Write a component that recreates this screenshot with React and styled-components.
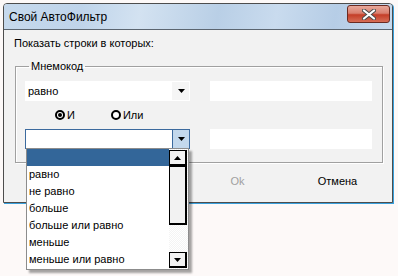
import styled, { createGlobalStyle } from "styled-components";

const GlobalStyle = createGlobalStyle`
  body {
    margin: 0;
    background: #fdf9f8;
    font-family: "Liberation Sans", Arial, sans-serif;
    font-size: 11px;
    color: #000;
  }
`;

const options = [
  "",
  "равно",
  "не равно",
  "больше",
  "больше или равно",
  "меньше",
  "меньше или равно",
];

const Page = styled.div`
  padding: 3px 0 0 3px;
  width: 398px;
  height: 276px;
  box-sizing: border-box;
`;

const Window = styled.div`
  position: relative;
  width: 390px;
  height: 200px;
  box-sizing: border-box;
  border: 1px solid #4d4d4d;
  border-radius: 4px 4px 0 0;
  box-shadow: 1px 1px 0 #3aa0dc;
  display: flex;
  flex-direction: column;
  background: #f2f2f2;
`;

const TitleBar = styled.div`
  height: 25px;
  display: flex;
  align-items: center;
  justify-content: space-between;
  padding: 0 2px 0 5px;
  border-bottom: 1px solid #5b6570;
  border-radius: 3px 3px 0 0;
  background: linear-gradient(
    100deg,
    #c6d9ed 0%,
    #bfd4ea 20%,
    #d3e2f1 35%,
    #b9cfe6 55%,
    #c9dbee 70%,
    #b6cde6 85%,
    #c8daee 100%
  );
`;

const Title = styled.span`
  font-size: 12px;
  margin-top: 1px;
`;

const CloseButton = styled.div`
  align-self: flex-start;
  width: 41px;
  height: 16px;
  margin-top: 1px;
  border: 1px solid #6b2b22;
  border-radius: 3px;
  background: linear-gradient(#e9a89b 0%, #d9806f 45%, #c43e28 55%, #d66d56 100%);
  display: flex;
  align-items: center;
  justify-content: center;
`;

const Body = styled.div`
  flex: 1;
  display: flex;
  flex-direction: column;
  padding: 5px 8px 0 10px;
`;

const Prompt = styled.div`
  height: 16px;
  line-height: 16px;
`;

const Group = styled.fieldset`
  margin: 9px 0 0 1px;
  padding: 9px 10px 13px 9px;
  border: 1px solid #a0a0a0;
  box-shadow: inset 1px 1px 0 #fff, 1px 1px 0 #fff;
  display: flex;
  flex-direction: column;
  min-width: 0;
  width: 368px;
  box-sizing: border-box;
`;

const Legend = styled.legend`
  padding: 0 2px;
  margin-left: 4px;
  line-height: 12px;
`;

const Row = styled.div`
  display: flex;
  gap: 20px;
  height: 20px;
`;

const Combo = styled.div`
  position: relative;
  width: 165px;
  box-sizing: border-box;
  background: #fff;
  display: flex;
  align-items: stretch;
  border: 1px solid ${(p) => (p.$focused ? "#3c6a9e" : "#fff")};
`;

const ComboText = styled.div`
  flex: 1;
  padding-left: 2px;
  line-height: 18px;
`;

const ComboArrow = styled.div`
  width: 16px;
  display: flex;
  align-items: center;
  justify-content: center;
  background: ${(p) => (p.$focused ? "#c3d8ec" : "#f5f5f5")};
  border-left: 1px solid ${(p) => (p.$focused ? "#3c6a9e" : "#f5f5f5")};
`;

const TextBox = styled.div`
  width: 162px;
  background: #fff;
`;

const RadioRow = styled.div`
  display: flex;
  gap: 36px;
  padding: 0 0 1px 30px;
  height: 28px;
  box-sizing: border-box;
  align-items: center;
`;

const Radio = styled.label`
  display: flex;
  align-items: center;
  gap: 2px;
`;

const RadioCircle = styled.span`
  width: 10px;
  height: 10px;
  box-sizing: border-box;
  border: 2px solid #000;
  border-radius: 50%;
  background: #fff;
  display: flex;
  align-items: center;
  justify-content: center;
  &::after {
    content: "";
    width: 4px;
    height: 4px;
    border-radius: 50%;
    background: ${(p) => (p.$checked ? "#000" : "transparent")};
  }
`;

const Buttons = styled.div`
  display: flex;
  justify-content: flex-end;
  gap: 25px;
  padding: 8px 9px 0 0;
`;

const Button = styled.div`
  width: 75px;
  text-align: center;
  line-height: 20px;
  color: ${(p) => (p.$disabled ? "#a0a0a0" : "#000")};
`;

const DropList = styled.div`
  position: absolute;
  left: 0;
  top: 100%;
  width: 163px;
  height: 122px;
  box-sizing: border-box;
  background: #fff;
  border: 1px solid #8c8c8c;
  box-shadow: 3px 3px 2px rgba(0, 0, 0, 0.35);
  display: flex;
  z-index: 2;
`;

const Items = styled.div`
  flex: 1;
`;

const Item = styled.div`
  height: 17px;
  line-height: 17px;
  padding-left: 2px;
  background: ${(p) => (p.$selected ? "#336699" : "transparent")};
  color: ${(p) => (p.$selected ? "#fff" : "#000")};
`;

const ScrollBar = styled.div`
  width: 18px;
  display: flex;
  flex-direction: column;
  padding: 1px 1px 1px 0;
  background: repeating-conic-gradient(#f4f4f4 0 25%, #fff 0 50%) 0 0 / 2px 2px;
`;

const ScrollButton = styled.div`
  height: 16px;
  box-sizing: border-box;
  border: 2px solid #000;
  border-width: 1px 2px 2px 1px;
  background: #f2f2f2;
  display: flex;
  align-items: center;
  justify-content: center;
`;

const Thumb = styled.div`
  height: 59px;
  box-sizing: border-box;
  border: 1px solid #000;
  border-width: 1px 2px 2px 1px;
  background: #f2f2f2;
`;

const Spacer = styled.div`
  flex: 1;
`;

const Tri = ({ up }) => (
  <svg width="7" height="4" viewBox="0 0 7 4">
    <path d={up ? "M3.5 0 L7 4 L0 4 Z" : "M0 0 L7 0 L3.5 4 Z"} fill="#000" />
  </svg>
);

export default function App() {
  return (
    <Page>
      <GlobalStyle />
      <Window>
        <TitleBar>
          <Title>Свой АвтоФильтр</Title>
          <CloseButton>
            <svg width="14" height="11" viewBox="0 0 14 11">
              <path
                d="M2 1.5 L12 9.5 M12 1.5 L2 9.5"
                stroke="#4a4a4a"
                strokeWidth="4"
                strokeLinecap="round"
              />
              <path
                d="M2 1.5 L12 9.5 M12 1.5 L2 9.5"
                stroke="#fff"
                strokeWidth="2.2"
                strokeLinecap="round"
              />
            </svg>
          </CloseButton>
        </TitleBar>
        <Body>
          <Prompt>Показать строки в которых:</Prompt>
          <Group>
            <Legend>Мнемокод</Legend>
            <Row>
              <Combo>
                <ComboText>равно</ComboText>
                <ComboArrow>
                  <Tri />
                </ComboArrow>
              </Combo>
              <TextBox />
            </Row>
            <RadioRow>
              <Radio>
                <RadioCircle $checked />И
              </Radio>
              <Radio>
                <RadioCircle />
                Или
              </Radio>
            </RadioRow>
            <Row>
              <Combo $focused>
                <ComboText />
                <ComboArrow $focused>
                  <Tri />
                </ComboArrow>
                <DropList>
                  <Items>
                    {options.map((o, i) => (
                      <Item key={i} $selected={i === 0}>
                        {o}
                      </Item>
                    ))}
                  </Items>
                  <ScrollBar>
                    <ScrollButton>
                      <Tri up />
                    </ScrollButton>
                    <Thumb />
                    <Spacer />
                    <ScrollButton>
                      <Tri />
                    </ScrollButton>
                  </ScrollBar>
                </DropList>
              </Combo>
              <TextBox />
            </Row>
          </Group>
          <Buttons>
            <Button $disabled>Ok</Button>
            <Button>Отмена</Button>
          </Buttons>
        </Body>
      </Window>
    </Page>
  );
}
